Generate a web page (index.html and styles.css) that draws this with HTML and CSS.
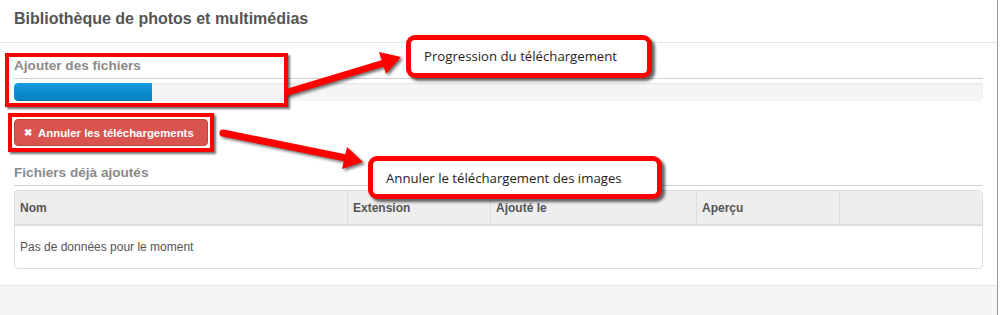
FILE: index.html
```html
<!DOCTYPE html>
<html lang="fr">
<head>
<meta charset="utf-8">
<title>Bibliothèque de photos et multimédias</title>
<link rel="stylesheet" href="styles.css">
</head>
<body>
<div class="modal">
  <div class="modal-header">
    <h3 class="modal-title">Bibliothèque de photos et multimédias</h3>
  </div>
  <div class="modal-body">
    <h4 class="section-title">Ajouter des fichiers</h4>
    <div class="progress"><div class="progress-bar" style="width:138px"></div></div>
    <button class="btn-danger" type="button"><span class="btn-icon">✖</span>Annuler les téléchargements</button>
    <h4 class="section-title second">Fichiers déjà ajoutés</h4>
    <table class="files">
      <colgroup>
        <col style="width:333px"><col style="width:143px"><col style="width:206px"><col style="width:143px"><col>
      </colgroup>
      <thead>
        <tr><th>Nom</th><th>Extension</th><th>Ajouté le</th><th>Aperçu</th><th></th></tr>
      </thead>
      <tbody>
        <tr><td colspan="5">Pas de données pour le moment</td></tr>
      </tbody>
    </table>
  </div>
  <div class="modal-footer"></div>
</div>

<div class="mark mark-progress"></div>
<div class="mark mark-button"></div>

<svg class="arrows" width="1000" height="315" viewBox="0 0 1000 315">
  <g class="arrow">
    <line x1="288" y1="92" x2="384" y2="63" />
    <polygon points="401,57 386,74 379,52" />
  </g>
  <g class="arrow">
    <line x1="223" y1="133" x2="346" y2="158" />
    <polygon points="363,162 342,169 347,147" />
  </g>
</svg>

<div class="callout callout-progress">Progression du téléchargement</div>
<div class="callout callout-cancel">Annuler le téléchargement des images</div>
</body>
</html>
```

FILE: styles.css
```css
html, body {
  margin: 0;
  padding: 0;
  background: #ffffff;
}
body {
  position: relative;
  width: 1000px;
  height: 315px;
  overflow: hidden;
  font-family: "Liberation Sans", Arial, sans-serif;
  color: #555;
}
.modal {
  width: 998px;
  height: 315px;
  box-sizing: border-box;
  border-right: 1px solid #9a9a9a;
  display: flex;
  flex-direction: column;
  background: #fff;
}
.modal-header {
  height: 42px;
  box-sizing: content-box;
  border-bottom: 1px solid #e5e5e5;
  padding: 0 14px;
  display: flex;
  align-items: center;
}
.modal-title {
  margin: 0;
  font-size: 16px;
  font-weight: bold;
  color: #555;
  line-height: 20px;
  padding-bottom: 4px;
}
.modal-body {
  padding: 14px 14px 16px 14px;
}
.section-title {
  margin: 0;
  font-size: 13.6px;
  line-height: 18px;
  font-weight: bold;
  color: #8a8a8a;
  padding-bottom: 3px;
  border-bottom: 1px solid #cfcfcf;
}
.section-title.second {
  margin-top: 18px;
}
.progress {
  margin-top: 4px;
  height: 18px;
  background: #f5f5f5;
  border-radius: 4px;
  box-shadow: inset 0 1px 2px rgba(0,0,0,0.08);
  overflow: hidden;
}
.progress-bar {
  height: 100%;
  background: linear-gradient(#149bdf, #0480be);
  border-radius: 4px 0 0 4px;
}
.btn-danger {
  display: flex;
  align-items: center;
  margin-top: 18px;
  height: 27px;
  width: 194px;
  padding: 0 0 0 9px;
  box-sizing: border-box;
  border: 1px solid #c9413c;
  border-radius: 4px;
  background: #d9534f;
  color: #fff;
  font-family: "Liberation Sans", Arial, sans-serif;
  font-size: 11.4px;
  font-weight: bold;
}
.btn-icon {
  font-size: 10px;
  margin-right: 6px;
}
.files {
  margin-top: 4px;
  width: 969px;
  table-layout: fixed;
  border-collapse: separate;
  border-spacing: 0;
  border: 1px solid #dddddd;
  border-radius: 4px;
  font-size: 12px;
  color: #555;
}
.files th {
  background: #eeeeee;
  height: 33px;
  padding: 0 5px;
  text-align: left;
  font-weight: bold;
  border-right: 1px solid #dddddd;
  border-bottom: 2px solid #dddddd;
}
.files th:first-child { border-top-left-radius: 3px; }
.files th:last-child { border-right: none; border-top-right-radius: 3px; }
.files td {
  height: 42px;
  padding: 0 5px;
}
.modal-footer {
  flex: 1;
  border-top: 1px solid #e5e5e5;
  background: #f5f5f5;
}

/* Annotations overlaid on the screenshot */
.mark {
  position: absolute;
  border: 4px solid #ff0000;
  box-sizing: border-box;
  box-shadow: 2px 2px 2px rgba(0,0,0,0.55);
}
.mark-progress { left: 5px; top: 53px; width: 283px; height: 54px; }
.mark-button { left: 8px; top: 113px; width: 206px; height: 39px; }

.arrows {
  position: absolute;
  left: 0;
  top: 0;
  pointer-events: none;
  filter: drop-shadow(2px 2px 1.5px rgba(0,0,0,0.55));
}
.arrow line {
  stroke: #ff0000;
  stroke-width: 7;
  stroke-linecap: round;
}
.arrow polygon {
  fill: #ff0000;
}

.callout {
  position: absolute;
  box-sizing: border-box;
  border: 5px solid #ff0000;
  border-radius: 9px;
  background: #fff;
  box-shadow: 3px 3px 3px rgba(0,0,0,0.6);
  font-family: "Open Sans", "Noto Sans", sans-serif;
  font-size: 13.2px;
  color: #1e1e1e;
  display: flex;
  align-items: center;
  padding-left: 13px;
}
.callout-progress { left: 406px; top: 35px; width: 246px; height: 43px; padding-bottom: 2px; }
.callout-cancel { left: 368px; top: 156px; width: 294px; height: 43px; padding-left: 13px; }
```
